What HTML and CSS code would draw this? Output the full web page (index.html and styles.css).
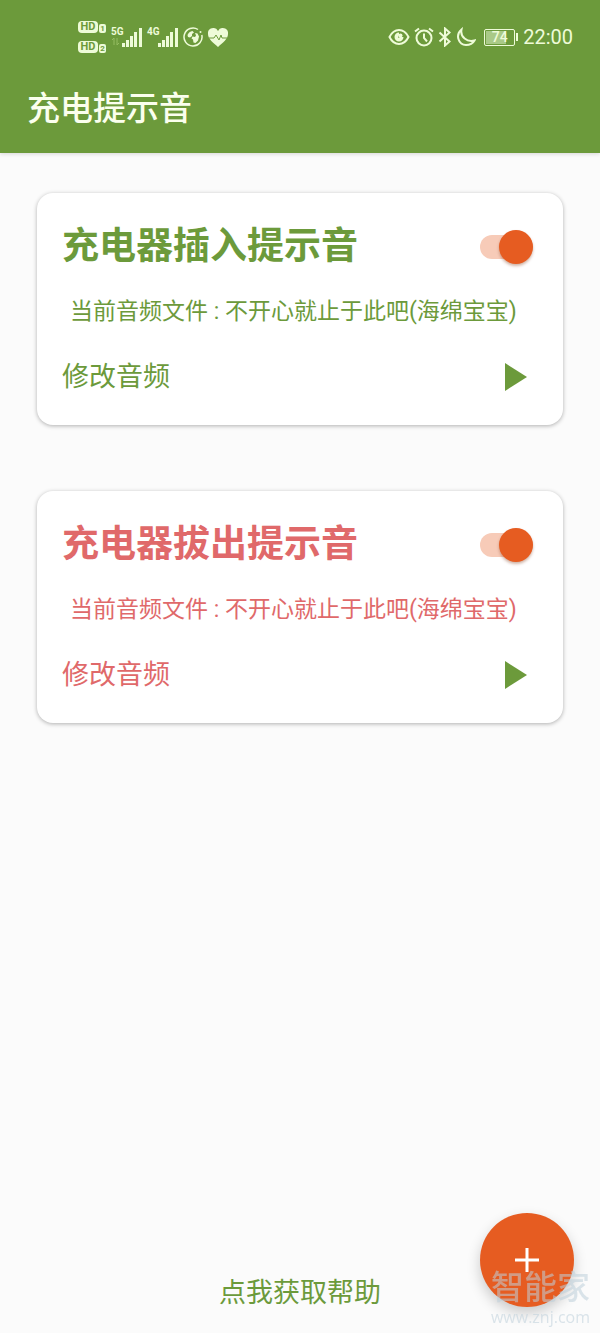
FILE: index.html
```html
<!DOCTYPE html>
<html lang="zh-CN">
<head>
    <meta charset="UTF-8">
    <meta name="viewport" content="width=device-width, initial-scale=1.0">
    <title>充电提示音</title>
    <link rel="stylesheet" href="styles.css">
</head>
<body>
    <header class="app-header">
        <div class="status-bar">
            <div class="status-left">
                <div class="hd-list">
                    <div class="hd"><span class="hd-badge">HD</span><span class="hd-num">1</span></div>
                    <div class="hd"><span class="hd-badge">HD</span><span class="hd-num">2</span></div>
                </div>
                <div class="signal">
                    <div class="signal-label">
                        <span>5G</span>
                        <svg class="arrows" width="10" height="9" viewBox="0 0 10 9"><path d="M3 8V1L1 3M6 1v7l2-2" /></svg>
                    </div>
                    <svg width="20" height="19" viewBox="0 0 20 19"><path d="M0 15h3v4H0zM4 12h3v7H4zM8 8h3v11H8zM12 4h3v15h-3zM17 0h3v19h-3z" /></svg>
                </div>
                <div class="signal">
                    <div class="signal-label"><span>4G</span></div>
                    <svg width="20" height="19" viewBox="0 0 20 19"><path d="M0 15h3v4H0zM4 12h3v7H4zM8 8h3v11H8zM12 4h3v15h-3zM17 0h3v19h-3z" /></svg>
                </div>
                <svg class="globe" width="20" height="20" viewBox="0 0 20 20">
                    <path class="line thin" d="M15 2.500A9 9 0 1 0 18.800 8" />
                    <circle cx="17.500" cy="5" r="1" />
                    <path d="M4.500 8Q6 4.500 9.500 4l1.500 1.500-2 1.500v2l-2 1.500L5 10zM12 6l2.500.500 1.500 3-1 4-2.500 2.500-2-.500-.500-3-1.500-1 1-2 2.500.500 1-1.500z" />
                </svg>
                <svg class="heart" width="20" height="19" viewBox="0 0 20 19">
                    <path d="M10 19C5 14.500 0 11 0 6a5.300 5.300 0 0 1 10-3A5.300 5.300 0 0 1 20 6c0 5-5 8.500-10 13z" />
                    <path class="pulse" d="M1 10h5l2-3 3 5 2-5 1 3h5" />
                </svg>
            </div>
            <div class="status-right">
                <svg width="22" height="18" viewBox="0 0 22 18">
                    <path class="line" d="M1.500 9Q5 2 11 2t9.500 7Q17 16 11 16T1.500 9z" />
                    <path d="M11 4.500a4.500 4.500 0 1 0 4.500 4.500h-3.500l-2 1 1-3z" />
                    <circle cx="12.500" cy="7.500" r="2" />
                </svg>
                <svg width="20" height="20" viewBox="0 0 20 20">
                    <circle class="line" cx="10" cy="11" r="7.500" />
                    <path class="line" d="M10 6.500V11l3 3.500M1 4.500l4-3M19 4.500l-4-3" />
                </svg>
                <svg width="14" height="20" viewBox="0 0 14 20">
                    <path class="line" d="M1.500 5.500l10 9L7 18.500v-17l4.500 4-10 9" />
                </svg>
                <svg class="moon" width="20" height="20" viewBox="0 0 20 20">
                    <path class="line" d="M5.500 2.500C-1 8 2.500 18 10 18q6 0 8.500-4.500C11 15.500 4 10 5.500 2.500z" />
                </svg>
                <div class="battery"><span class="battery-level">74</span></div>
                <span class="clock">22:00</span>
            </div>
        </div>
        <h1>充电提示音</h1>
    </header>

    <main>
        <section class="card">
            <div class="card-row">
                <h2><label for="plugIn">充电器插入提示音</label></h2>
                <input class="switch" type="checkbox" id="plugIn" checked>
            </div>
            <p>当前音频文件 : 不开心就止于此吧(海绵宝宝)</p>
            <div class="card-row">
                <button class="edit">修改音频</button>
                <button class="play" aria-label="播放">
                    <svg width="24" height="30" viewBox="0 0 24 30"><path d="M1 1v28l22-14z" /></svg>
                </button>
            </div>
        </section>

        <section class="card card-red">
            <div class="card-row">
                <h2><label for="plugOut">充电器拔出提示音</label></h2>
                <input class="switch" type="checkbox" id="plugOut" checked>
            </div>
            <p>当前音频文件 : 不开心就止于此吧(海绵宝宝)</p>
            <div class="card-row">
                <button class="edit">修改音频</button>
                <button class="play" aria-label="播放">
                    <svg width="24" height="30" viewBox="0 0 24 30"><path d="M1 1v28l22-14z" /></svg>
                </button>
            </div>
        </section>
    </main>

    <footer>
        <a href="#help">点我获取帮助</a>
    </footer>

    <button class="fab" aria-label="添加">
        <svg width="24" height="24" viewBox="0 0 24 24"><path d="M12 0v24M0 12h24" /></svg>
    </button>

    <div class="watermark">
        <span class="watermark-name">智能家</span>
        <span class="watermark-url">www.znj.com</span>
    </div>
</body>
</html>
```
FILE: styles.css
```css
* {
    box-sizing: border-box;
}

body {
    display: flex;
    flex-direction: column;
    min-height: 100vh;
    margin: 0;
    background-color: #fbfbfb;
    color: #6c9a3b;
    font-family: Roboto, "Noto Sans CJK SC", sans-serif;
}

button {
    padding: 0;
    border: none;
    background: none;
    color: inherit;
    font-family: inherit;
    cursor: pointer;
}

svg {
    display: block;
    flex: none;
    fill: currentColor;
}

/* Header */
.app-header {
    padding-bottom: 9px;
    background-color: #6c9a3b;
    color: #fbffee;
    box-shadow: 0 1px 4px rgba(0, 0, 0, 0.15);
}

.status-bar {
    display: flex;
    justify-content: space-between;
    align-items: center;
    height: 74px;
    padding: 0 27px 0 78px;
    color: #eefbd8;
}

.status-left,
.status-right {
    display: flex;
    align-items: center;
    gap: 5px;
}

.status-right {
    gap: 4px;
}

.line {
    fill: none;
    stroke: currentColor;
    stroke-width: 2;
}

.thin {
    stroke-width: 1.5;
}

.hd-list {
    display: grid;
    gap: 8px;
}

.hd {
    display: flex;
    align-items: flex-end;
    gap: 1px;
}

.hd-badge,
.hd-num {
    border-radius: 4px;
    background-color: #eefbd8;
    color: #6c9a3b;
    font-size: 11px;
    font-weight: bold;
    line-height: 12px;
    text-align: center;
}

.hd-badge {
    width: 20px;
}

.hd-num {
    width: 7px;
    border-radius: 2px;
    font-size: 8px;
    line-height: 9px;
}

.signal {
    display: flex;
    align-items: flex-end;
}

.signal-label {
    display: flex;
    flex-direction: column;
    width: 11px;
    height: 20px;
    font-size: 10px;
    font-weight: bold;
    line-height: 10px;
}

.arrows {
    fill: none;
    stroke: #95bd62;
}

.pulse {
    fill: none;
    stroke: #6c9a3b;
}

.battery {
    display: flex;
    align-items: center;
    margin: 0 1px 0 4px;
}

.battery::after {
    content: "";
    width: 2px;
    height: 8px;
    margin-left: 1px;
    background-color: currentColor;
}

.battery-level {
    width: 31px;
    border: 1px solid currentColor;
    border-radius: 2px;
    background: linear-gradient(to right, #a9c987 74%, transparent 74%);
    background-clip: content-box;
    padding: 1px;
    font-size: 14px;
    font-weight: 500;
    line-height: 13px;
    text-align: center;
}

.clock {
    font-size: 20px;
}

h1 {
    margin: 0;
    padding: 0 27px;
    font-size: 33px;
    font-weight: 500;
    line-height: 70px;
}

/* Cards */
main {
    display: grid;
    gap: 66px;
    padding: 40px 37px;
}

.card {
    padding: 28px 26px 24px 25px;
    border-radius: 16px;
    background-color: #fff;
    box-shadow: 0 1px 4px rgba(0, 0, 0, 0.3);
}

.card-red {
    color: #e0696a;
}

.card-row {
    display: flex;
    justify-content: space-between;
    align-items: center;
}

h2 {
    margin: 0;
    font-size: 37px;
    font-weight: bold;
    line-height: 52px;
}

.card p {
    margin: 21px 0 23px;
    padding: 0 8px;
    font-size: 23px;
    line-height: 36px;
}

.edit {
    font-size: 27px;
    line-height: 48px;
}

.play {
    padding: 0 9px;
    color: #6c9a3b;
}

.switch {
    appearance: none;
    display: flex;
    justify-content: flex-end;
    align-items: center;
    width: 53px;
    height: 24px;
    margin: 0 4px 0 0;
    border-radius: 12px;
    background-color: #f7cbb8;
    cursor: pointer;
}

.switch::before {
    content: "";
    width: 34px;
    height: 34px;
    flex: none;
    border-radius: 50%;
    background-color: #e65c21;
    box-shadow: 0 2px 3px rgba(120, 40, 0, 0.35);
}

.switch:not(:checked) {
    justify-content: flex-start;
    background-color: #ccc;
}

/* Bottom */
footer {
    margin-top: auto;
    padding-bottom: 20px;
    text-align: center;
}

footer a {
    color: inherit;
    font-size: 27px;
    line-height: 40px;
    text-decoration: none;
}

.fab {
    position: fixed;
    right: 26px;
    bottom: 26px;
    display: grid;
    place-items: center;
    width: 94px;
    height: 94px;
    border-radius: 50%;
    background-color: #e65c21;
    color: #fff;
    box-shadow: 0 6px 14px rgba(0, 0, 0, 0.2);
}

.fab path {
    stroke: currentColor;
    stroke-width: 3;
}

.watermark {
    position: fixed;
    right: 10px;
    bottom: 8px;
    display: grid;
    gap: 3px;
    justify-items: center;
    color: rgba(190, 208, 218, 0.55);
    pointer-events: none;
}

.watermark-name {
    font-size: 33px;
    font-weight: 500;
    line-height: 36px;
}

.watermark-url {
    font-family: "Open Sans", sans-serif;
    font-size: 16px;
    line-height: 16px;
}
```
